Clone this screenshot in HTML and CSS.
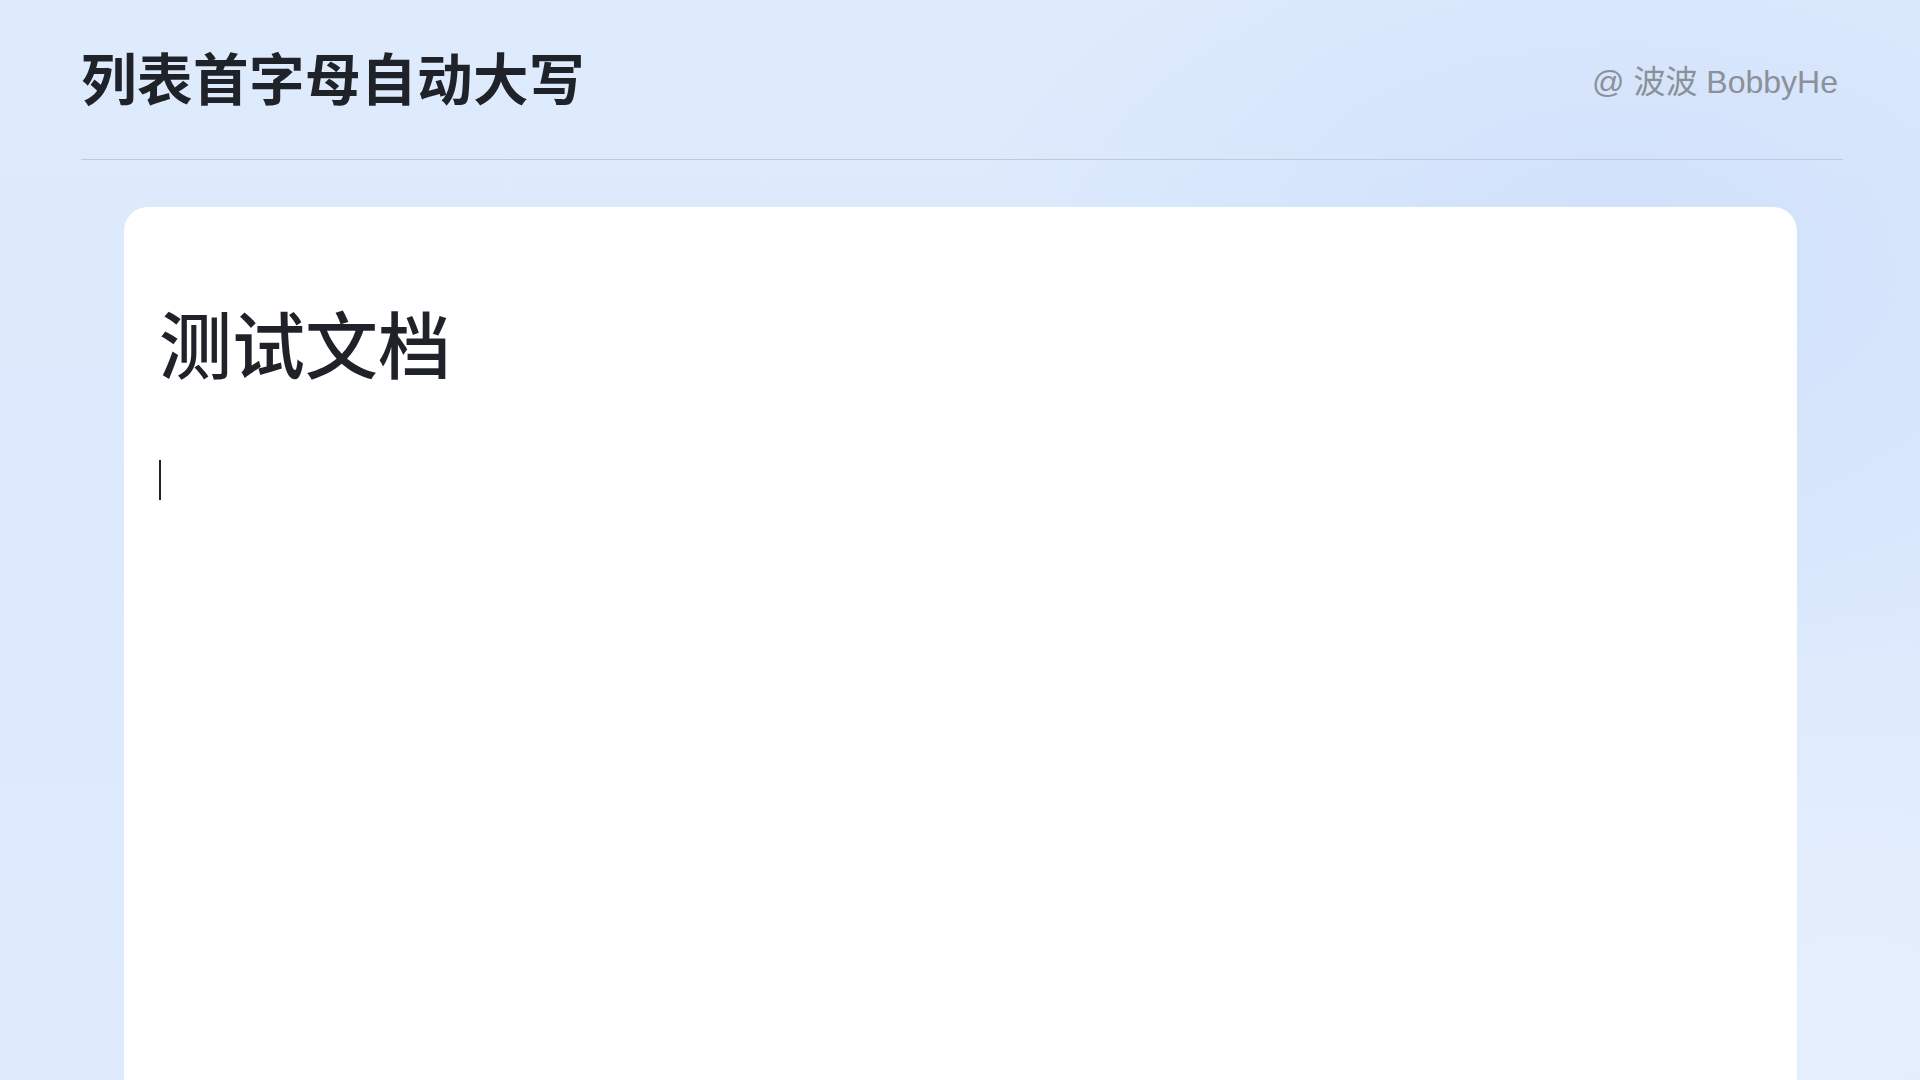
FILE: index.html
```html
<!DOCTYPE html>
<html lang="zh-CN">
<head>
<meta charset="utf-8">
<title>列表首字母自动大写</title>
<link rel="stylesheet" href="styles.css">
</head>
<body>
<div class="page">
  <header class="header">
    <h1 class="page-title">列表首字母自动大写</h1>
    <div class="author">@ 波波 BobbyHe</div>
  </header>
  <main class="card">
    <h2 class="doc-title">测试文档</h2>
    <div class="editor-line"><span class="caret"></span></div>
  </main>
</div>
</body>
</html>
```
FILE: styles.css
```css
html, body {
  margin: 0;
  padding: 0;
  height: 100%;
}
body {
  overflow: hidden;
  font-family: "Liberation Sans", "Noto Sans CJK SC", sans-serif;
  background-color: #dceafc;
  background-image:
    radial-gradient(ellipse 650px 420px at 1620px 260px, rgba(203, 221, 251, 0.75), rgba(203, 221, 251, 0) 100%),
    radial-gradient(ellipse 600px 400px at 1850px 1000px, rgba(230, 239, 253, 0.9), rgba(230, 239, 253, 0) 100%),
    linear-gradient(180deg, #deebfc 0%, #dce9fc 50%, #dfebfd 100%);
}
.page {
  display: flex;
  flex-direction: column;
  height: 100%;
}
.header {
  box-sizing: border-box;
  display: flex;
  align-items: center;
  justify-content: space-between;
  height: 160px;
  margin: 0 77px 0 81px;
  padding: 0 5px 6px 0;
  border-bottom: 1px solid #c3c9d2;
  flex-shrink: 0;
}
.page-title {
  margin: 0;
  font-family: "Noto Sans CJK SC", sans-serif;
  font-size: 55.5px;
  font-weight: 700;
  color: #1f2329;
  letter-spacing: 0.5px;
  line-height: 1.2;
}
.author {
  margin-top: 4px;
  font-family: "Liberation Sans", "Noto Sans CJK SC", sans-serif;
  font-size: 32px;
  font-weight: 400;
  color: #8c9099;
}
.card {
  flex: 1;
  margin: 47px 123px 0 124px;
  background: #ffffff;
  border-radius: 24px 24px 0 0;
  padding: 91px 34px 0 35px;
}
.doc-title {
  margin: 0;
  font-family: "Noto Sans CJK SC", sans-serif;
  font-size: 73px;
  font-weight: 500;
  color: #1f2329;
  line-height: 1.2;
}
.editor-line {
  margin-top: 74px;
  height: 40px;
  display: flex;
}
.caret {
  display: block;
  width: 2px;
  height: 40px;
  background: #1f2329;
}
```
